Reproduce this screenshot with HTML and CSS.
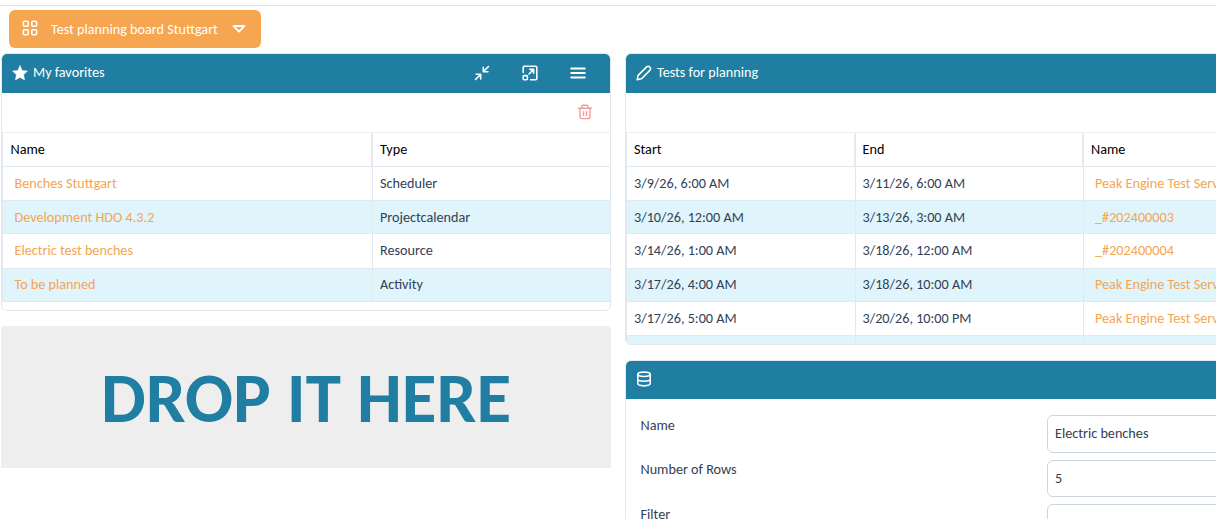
FILE: index.html
```html
<!DOCTYPE html>
<html lang="en">
<head>
<meta charset="utf-8">
<title>Test planning board Stuttgart</title>
<link rel="stylesheet" href="styles.css">
</head>
<body>
<header class="topbar">
  <button class="board-button">
    <svg class="icon" viewBox="0 0 16 16"><rect x="1.4" y="1.2" width="4.8" height="5" rx="1"/><rect x="9.8" y="1.2" width="4.8" height="5" rx="1"/><rect x="1.4" y="9.8" width="4.8" height="5" rx="1"/><rect x="9.8" y="9.8" width="4.8" height="5" rx="1"/></svg>
    <span class="board-title">Test planning board Stuttgart</span>
    <svg class="caret" viewBox="0 0 14 10"><path d="M1.6 2h10.8L7 7.6z"/></svg>
  </button>
</header>
<main class="board">
  <section class="column-left">
    <article class="panel favorites">
      <div class="panel-head">
        <svg class="icon solid" viewBox="0 0 16 16"><path d="M8 .7l2.2 4.8 5.2.6-3.8 3.6 1 5.2L8 12.4l-4.6 2.5 1-5.2L.6 6.1l5.2-.6z"/></svg>
        <span class="panel-title">My favorites</span>
        <div class="tools">
          <svg class="icon" viewBox="0 0 16 16"><path d="M14.5 1.5L9.5 6.5M9.3 2.3v4.4h4.6M1.5 14.5l5-5M2.2 9.3h4.5v4.6"/></svg>
          <svg class="icon" viewBox="0 0 16 16"><path d="M1.2 7.5V2.4q0-1.2 1.2-1.2h11.2q1.2 0 1.2 1.2v11.2q0 1.2-1.2 1.2H8.5M7 9l4.4-4.4M7.8 4.4h3.8v3.8"/><rect x="1.2" y="10.6" width="4.2" height="4.2" rx="1"/></svg>
          <svg class="icon menu" viewBox="0 0 16 16"><path d="M1.2 3.5h13.6M1.2 8h13.6M1.2 12.5h13.6"/></svg>
        </div>
      </div>
      <div class="toolbar">
        <svg class="icon trash" viewBox="0 0 16 16"><path d="M1.5 4.2h13M3 4.4v8.6q0 1.6 1.6 1.6h6.8q1.6 0 1.6-1.6V4.4M4.9 4V2.4q0-1.2 1.2-1.2h3.8q1.2 0 1.2 1.2V4M6.5 7.6v3.8M9.5 7.6v3.8"/></svg>
      </div>
      <div class="table">
        <div class="row head"><span><b>Name</b></span><span><b>Type</b></span></div>
        <div class="row"><span><a>Benches Stuttgart</a></span><span>Scheduler</span></div>
        <div class="row"><span><a>Development HDO 4.3.2</a></span><span>Projectcalendar</span></div>
        <div class="row tall"><span><a>Electric test benches</a></span><span>Resource</span></div>
        <div class="row"><span><a>To be planned</a></span><span>Activity</span></div>
      </div>
    </article>
    <div class="dropzone">DROP IT HERE</div>
  </section>
  <section class="column-right">
    <article class="panel tests">
      <div class="panel-head">
        <svg class="icon" viewBox="0 0 16 16"><path d="M1.2 14.8l.9-4.4 8.3-8.3q1.7-1.6 3.3-.1 1.7 1.7.1 3.4l-8.3 8.3z"/></svg>
        <span class="panel-title">Tests for planning</span>
      </div>
      <div class="toolbar"></div>
      <div class="table">
        <div class="row head"><span><b>Start</b></span><span><b>End</b></span><span><b>Name</b></span></div>
        <div class="row"><span>3/9/26, 6:00 AM</span><span>3/11/26, 6:00 AM</span><span><a>Peak Engine Test Serv</a></span></div>
        <div class="row"><span>3/10/26, 12:00 AM</span><span>3/13/26, 3:00 AM</span><span><a>_#202400003</a></span></div>
        <div class="row tall"><span>3/14/26, 1:00 AM</span><span>3/18/26, 12:00 AM</span><span><a>_#202400004</a></span></div>
        <div class="row"><span>3/17/26, 4:00 AM</span><span>3/18/26, 10:00 AM</span><span><a>Peak Engine Test Serv</a></span></div>
        <div class="row"><span>3/17/26, 5:00 AM</span><span>3/20/26, 10:00 PM</span><span><a>Peak Engine Test Serv</a></span></div>
        <div class="row"><span></span><span></span><span></span></div>
      </div>
    </article>
    <article class="panel resource">
      <div class="panel-head">
        <svg class="icon" viewBox="0 0 16 16"><ellipse cx="8" cy="3.3" rx="6.2" ry="2.2"/><path d="M1.8 3.4v9.2c0 3 12.4 3 12.4 0V3.4M1.8 8c0 3 12.4 3 12.4 0"/></svg>
      </div>
      <div class="form">
        <div class="field"><label>Name</label><div class="input">Electric benches</div></div>
        <div class="field"><label>Number of Rows</label><div class="input">5</div></div>
        <div class="field"><label>Filter</label><div class="input"></div></div>
      </div>
    </article>
  </section>
</main>
</body>
</html>
```
FILE: styles.css
```css
* { box-sizing: border-box; }
body {
  margin: 0;
  height: 519px;
  overflow: hidden;
  background: #fff;
  color: #334155;
  font: 14.2px/17px Calibri, Carlito, Lato, sans-serif;
}
.topbar {
  height: 47.5px;
  margin-top: 5px;
  border-top: 1px solid #e2e5ee;
  padding: 4px 9px;
}
.board-button {
  display: flex;
  align-items: center;
  width: 252px;
  height: 38px;
  padding: 0 15px 0 13px;
  border: 0;
  border-radius: 6px;
  background: #f6a550;
  color: #fff;
  font: inherit;
}
.icon {
  width: 16px;
  height: 16px;
  flex: none;
  fill: none;
  stroke: #fff;
  stroke-width: 1.6;
  stroke-linecap: round;
  stroke-linejoin: round;
}
.board-button .icon { margin-top: -3px; }
.panel-head .solid { fill: #fff; stroke-width: .5; }
.panel-head .menu { stroke-width: 1.9; }
.board-title { margin-left: 13px; flex: 1; text-align: left; white-space: nowrap; }
.caret { width: 14px; height: 10px; fill: none; stroke: #fff; stroke-width: 1.9; stroke-linejoin: round; }
.board { display: flex; gap: 14.5px; padding-left: 1px; }
.column-left { width: 609.5px; flex: none; }
.column-right { width: 760px; flex: none; }
.panel {
  border: 1px solid #e2e8f0;
  border-radius: 6px;
  overflow: hidden;
  margin-bottom: 15px;
}
.favorites { height: 258px; }
.tests { height: 292px; }
.resource { height: 300px; }
.panel-head {
  display: flex;
  align-items: center;
  height: 40px;
  margin: -1px -1px 0;
  padding: 0 24.5px 0 10.5px;
  background: #1f7ea1;
  color: #fff;
}
.panel-title { margin-left: 5.5px; }
.resource .panel-head { height: 39px; }
.tools { display: flex; gap: 32px; margin-left: auto; }
.toolbar { display: flex; justify-content: flex-end; align-items: center; height: 40px; padding-right: 16.5px; border-bottom: 1px solid #eceef1; }
.toolbar .trash { stroke: #f49a9a; stroke-width: 1.4; }
.row { display: grid; height: 34px; border-bottom: 1px solid #e2e8f0; border-left: 1px solid #e2e8f0; }
.favorites .row { grid-template-columns: 369px 1fr; }
.tests .row { grid-template-columns: 227.5px 228.5px 1fr; }
.row:nth-child(2n + 3) { background: #e0f4fb; }
.row span { padding: 8px 7px; white-space: nowrap; }
.row span + span { border-left: 1px solid #e2e8f0; }
.row span:first-child { padding-left: 7.5px; }
.head span + span { border-left: 2px solid #e5e8ed; margin-left: -1px; }
.tests .row span:first-child { padding-left: 7px; }
.row b { color: #000; font-weight: 400; }
.row a { color: #f6a550; margin-left: 4px; }
.row:nth-child(3) { height: 33px; }
.row.tall { height: 35px; }
.row:nth-child(5) { height: 33px; }
.row:nth-child(5) span { padding-top: 7.5px; }
.dropzone {
  display: flex;
  align-items: center;
  justify-content: center;
  height: 142.5px;
  width: 610px;
  padding-top: 3px;
  border-radius: 4px 4px 0 0;
  background: #eee;
  color: #1f7ea1;
  font-size: 71px;
  font-weight: 700;
  white-space: nowrap;
  line-height: 80px;
}
.form { display: grid; gap: 7px; padding: 16.5px 14.5px; }
.field { display: grid; grid-template-columns: 406px 1fr; height: 37.5px; }
.field label { padding-top: 1.5px; }
.input { border: 1px solid #cbd5e1; border-radius: 6px; padding: 9px 7.5px; }
```
